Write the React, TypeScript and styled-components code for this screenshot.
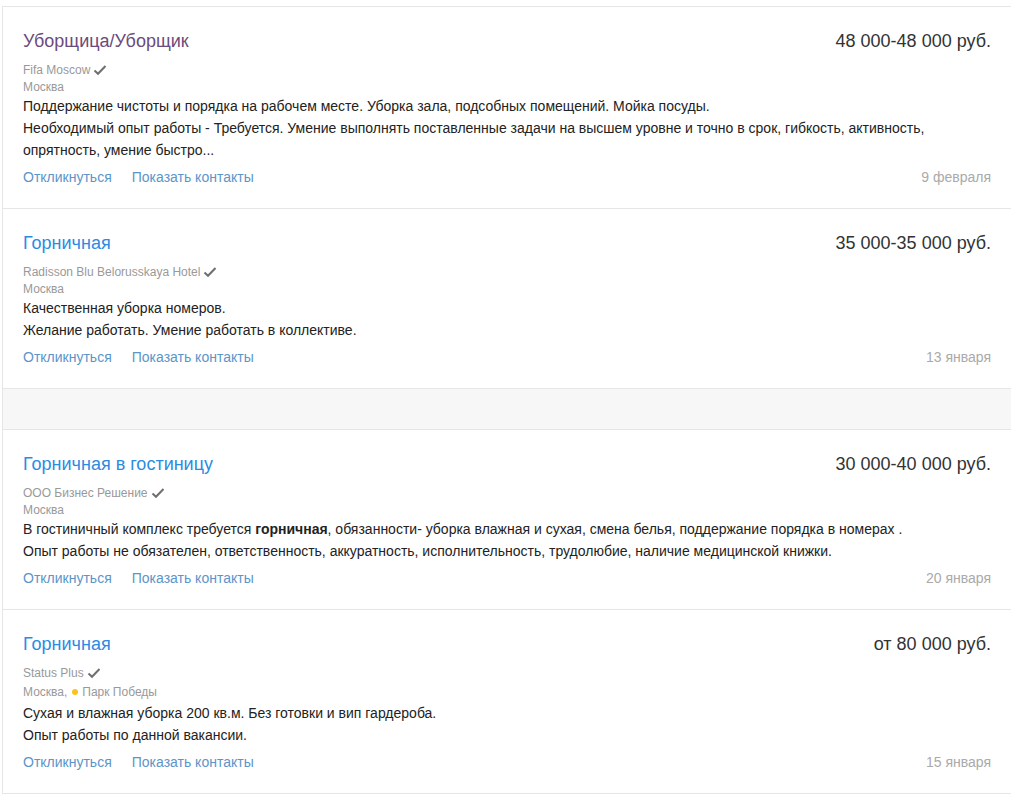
import styled, { createGlobalStyle } from "styled-components";

const GlobalStyle = createGlobalStyle`
  html, body {
    margin: 0;
    padding: 0;
    background: #ffffff;
  }
  body {
    font-family: "Liberation Sans", Arial, sans-serif;
    color: #333333;
  }
`;

interface Vacancy {
  title: string;
  visited?: boolean;
  salary: string;
  company: string;
  city: string;
  metro?: string;
  description: React.ReactNode[];
  date: string;
}

const vacancies: Vacancy[] = [
  {
    title: "Уборщица/Уборщик",
    visited: true,
    salary: "48 000-48 000 руб.",
    company: "Fifa Moscow",
    city: "Москва",
    description: [
      "Поддержание чистоты и порядка на рабочем месте. Уборка зала, подсобных помещений. Мойка посуды.",
      "Необходимый опыт работы - Требуется. Умение выполнять поставленные задачи на высшем уровне и точно в срок, гибкость, активность, опрятность, умение быстро...",
    ],
    date: "9 февраля",
  },
  {
    title: "Горничная",
    salary: "35 000-35 000 руб.",
    company: "Radisson Blu Belorusskaya Hotel",
    city: "Москва",
    description: [
      "Качественная уборка номеров.",
      "Желание работать. Умение работать в коллективе.",
    ],
    date: "13 января",
  },
];

const moreVacancies: Vacancy[] = [
  {
    title: "Горничная в гостиницу",
    salary: "30 000-40 000 руб.",
    company: "ООО Бизнес Решение",
    city: "Москва",
    description: [
      <>
        В гостиничный комплекс требуется <b>горничная</b>, обязанности- уборка влажная и сухая, смена белья, поддержание порядка в номерах .
      </>,
      "Опыт работы не обязателен, ответственность, аккуратность, исполнительность, трудолюбие, наличие медицинской книжки.",
    ],
    date: "20 января",
  },
  {
    title: "Горничная",
    salary: "от 80 000 руб.",
    company: "Status Plus",
    city: "Москва,",
    metro: "Парк Победы",
    description: [
      "Сухая и влажная уборка 200 кв.м. Без готовки и вип гардероба.",
      "Опыт работы по данной вакансии.",
    ],
    date: "15 января",
  },
];

const CheckIcon = () => (
  <CheckSvg viewBox="0 0 14 12" width="14" height="12">
    <path d="M1.5 6.5 L5 9.8 L12.5 2" fill="none" stroke="#6f6f6f" strokeWidth="2" />
  </CheckSvg>
);

const VacancyCard = ({ vacancy }: { vacancy: Vacancy }) => (
  <Card>
    <Header>
      <Title href="#" $visited={vacancy.visited}>
        {vacancy.title}
      </Title>
      <Salary>{vacancy.salary}</Salary>
    </Header>
    <Company>
      {vacancy.company}
      <CheckIcon />
    </Company>
    <City $metro={!!vacancy.metro}>
      {vacancy.city}
      {vacancy.metro && (
        <Metro>
          <MetroDot />
          {vacancy.metro}
        </Metro>
      )}
    </City>
    <Description>
      {vacancy.description.map((line, i) => (
        <p key={i}>{line}</p>
      ))}
    </Description>
    <Footer>
      <Actions>
        <ActionLink href="#">Откликнуться</ActionLink>
        <ActionLink href="#">Показать контакты</ActionLink>
      </Actions>
      <Date>{vacancy.date}</Date>
    </Footer>
  </Card>
);

const App = () => {
  return (
    <Page>
      <GlobalStyle />
      <List>
        {vacancies.map((v) => (
          <VacancyCard key={v.title + v.date} vacancy={v} />
        ))}
        <Band />
        {moreVacancies.map((v) => (
          <VacancyCard key={v.title + v.date} vacancy={v} />
        ))}
      </List>
    </Page>
  );
};

const Page = styled.div`
  padding-top: 6px;
  padding-left: 2px;
`;

const List = styled.div`
  display: flex;
  flex-direction: column;
  border-left: 1px solid #e6e6e6;
  border-top: 1px solid #e6e6e6;
`;

const Card = styled.div`
  display: flex;
  flex-direction: column;
  padding: 23px 20px 21px 20px;
  border-bottom: 1px solid #e6e6e6;
  background: #ffffff;
`;

const Header = styled.div`
  display: flex;
  justify-content: space-between;
  align-items: center;
  line-height: 22px;
`;

const Title = styled.a<{ $visited?: boolean }>`
  font-size: 18px;
  color: ${(props) => (props.$visited ? "#6b4b7d" : "#2b8be3")};
  text-decoration: none;
`;

const Salary = styled.div`
  font-size: 18px;
  color: #333333;
`;

const Company = styled.div`
  display: flex;
  align-items: center;
  gap: 3px;
  margin-top: 9px;
  font-size: 12px;
  line-height: 18px;
  color: #999999;
`;

const CheckSvg = styled.svg`
  display: block;
  margin-top: -1px;
`;

const City = styled.div<{ $metro: boolean }>`
  display: flex;
  align-items: center;
  gap: 5px;
  font-size: 12px;
  line-height: ${(props) => (props.$metro ? "20px" : "16px")};
  color: #999999;
`;

const Metro = styled.span`
  display: inline-flex;
  align-items: center;
  gap: 4px;
`;

const MetroDot = styled.span`
  width: 6px;
  height: 6px;
  border-radius: 50%;
  background: #fcc31e;
`;

const Description = styled.div`
  font-size: 14px;
  line-height: 22px;
  color: #222222;

  p {
    margin: 0;
  }

  b {
    font-weight: bold;
  }
`;

const Footer = styled.div`
  display: flex;
  justify-content: space-between;
  align-items: center;
  margin-top: 6px;
  line-height: 20px;
  font-size: 14px;
`;

const Actions = styled.div`
  display: flex;
  gap: 20px;
`;

const ActionLink = styled.a`
  color: #5c95c9;
  text-decoration: none;
`;

const Date = styled.div`
  color: #aaaaaa;
`;

const Band = styled.div`
  height: 40px;
  background: #f7f7f7;
  border-bottom: 1px solid #e6e6e6;
`;

export default App;
